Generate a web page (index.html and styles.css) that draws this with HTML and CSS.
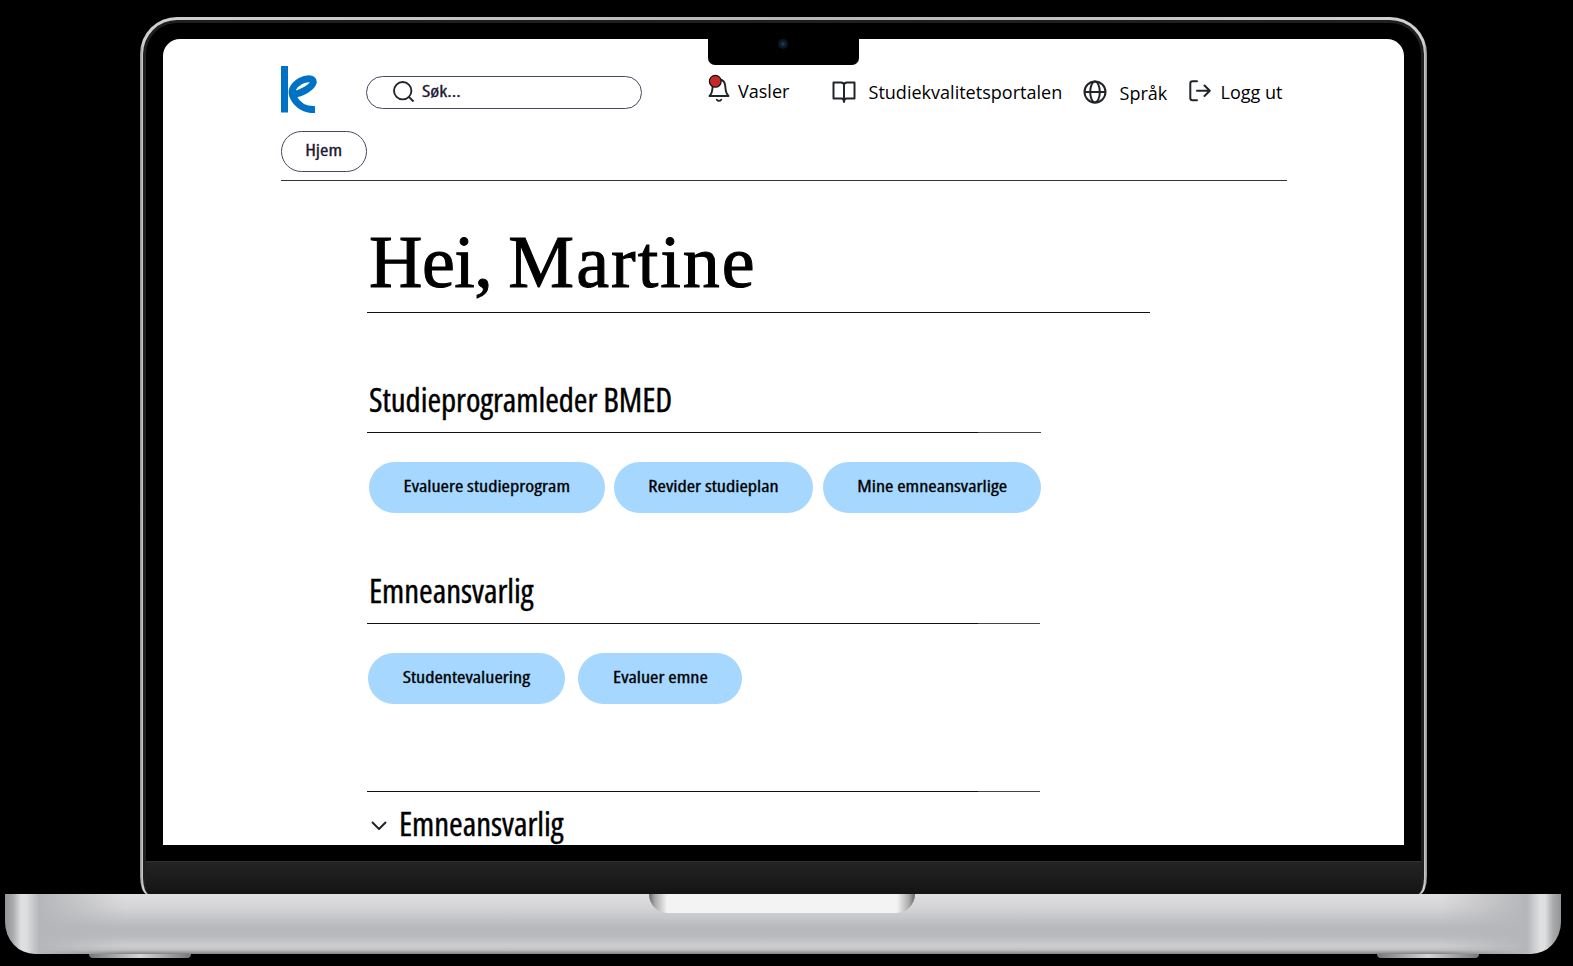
FILE: index.html
```html
<!DOCTYPE html>
<html lang="no">
<head>
  <meta charset="UTF-8">
  <meta name="viewport" content="width=device-width, initial-scale=1.0">
  <title>Studiekvalitetsportalen</title>
  <link rel="stylesheet" href="styles.css">
</head>
<body>
  <div class="laptop">
    <div class="lid">
      <div class="bezel">
        <div class="screen">
          <div class="notch"><span class="camera"></span></div>

          <header class="header">
            <div class="topbar">
              <svg class="logo" width="37" height="48" viewBox="0 0 37 48">
                <path d="M0 0H7V46.500H0Z" fill="#0072c6"/>
                <path d="M12 28.500C21 27.500 31.500 21 32.300 16C32.500 11.500 25 12 19.500 15C12.500 19 9 25 12.500 31.500C16.500 39.500 24.500 43.800 34 43.500" fill="none" stroke="#0072c6" stroke-width="7"/>
              </svg>
              <div class="search">
                <svg width="22" height="22" viewBox="0 0 22 22" fill="none" stroke="#212529" stroke-width="1.900">
                  <circle cx="9.700" cy="9.700" r="8.700"/>
                  <path d="M15.800 15.800L20.500 20.500"/>
                </svg>
                <span class="label">Søk...</span>
              </div>
              <nav class="nav">
                <a class="nav-item vasler">
                  <svg width="22" height="28" viewBox="0 0 22 28" fill="none" stroke="#212529" stroke-width="1.900" stroke-linecap="round" stroke-linejoin="round">
                    <path d="M1.500 22H20.500C18 19.500 17.500 17 17.300 12.500C17 7.500 14.500 5.500 11 5.500C7 5.500 4.700 8 4.600 12.500C4.500 17 4 19.500 1.500 22Z"/>
                    <path d="M8.800 25.700C10 27.300 12 27.300 13.200 25.700"/>
                    <circle cx="7.300" cy="7.300" r="5.900" fill="#c62828" stroke="#111" stroke-width="1.200"/>
                  </svg>
                  <span>Vasler</span>
                </a>
                <a class="nav-item portal">
                  <svg width="24" height="22" viewBox="0 0 24 22" fill="none" stroke="#212529" stroke-width="2" stroke-linejoin="round">
                    <path d="M12 4C12 2.300 10.800 1.500 9 1.500H1.500V17.500H9.500C11 17.500 12 18.300 12 21V4C12 2.300 13.200 1.500 15 1.500H22.500V17.500H14.500C13 17.500 12 18.300 12 21"/>
                  </svg>
                  <span>Studiekvalitetsportalen</span>
                </a>
                <a class="nav-item sprak">
                  <svg width="24" height="24" viewBox="0 0 24 24" fill="none" stroke="#212529" stroke-width="2">
                    <circle cx="12" cy="12" r="10.500"/>
                    <ellipse cx="12" cy="12" rx="4.800" ry="10.500"/>
                    <path d="M1.500 12H22.500"/>
                  </svg>
                  <span>Språk</span>
                </a>
                <a class="nav-item logg-ut">
                  <svg width="22" height="22" viewBox="0 0 22 22" fill="none" stroke="#212529" stroke-width="2" stroke-linecap="round" stroke-linejoin="round">
                    <path d="M8 1.300H3.500C2 1.300 1.300 2 1.300 3.500V18C1.300 19.500 2 20.300 3.500 20.300H8"/>
                    <path d="M8 10.800H20.500M15.500 5.500L20.800 10.800L15.500 16"/>
                  </svg>
                  <span>Logg ut</span>
                </a>
              </nav>
            </div>
            <a class="hjem"><span class="label">Hjem</span></a>
          </header>

          <main class="content">
            <h1>Hei, <span class="name">Martine</span></h1>

            <section class="role">
              <h2>Studieprogramleder BMED</h2>
              <div class="buttons">
                <button class="evaluere"><span class="label">Evaluere studieprogram</span></button>
                <button class="revider"><span class="label">Revider studieplan</span></button>
                <button class="mine"><span class="label">Mine emneansvarlige</span></button>
              </div>
            </section>

            <section class="role emne">
              <h2>Emneansvarlig</h2>
              <div class="buttons">
                <button class="student"><span class="label">Studentevaluering</span></button>
                <button class="evaluer-emne"><span class="label">Evaluer emne</span></button>
              </div>
            </section>

            <section class="accordion">
              <svg width="16" height="10" viewBox="0 0 16 10" fill="none" stroke="#212529" stroke-width="2" stroke-linecap="round" stroke-linejoin="round">
                <path d="M1.500 1.500L8 8L14.500 1.500"/>
              </svg>
              <h2>Emneansvarlig</h2>
            </section>
          </main>
        </div>
        <div class="chin"></div>
      </div>
    </div>
    <div class="base"><div class="thumb"></div></div>
    <div class="feet"><span></span><span></span></div>
  </div>
</body>
</html>
```

FILE: styles.css
```css
* {
  box-sizing: border-box;
}
body {
  margin: 0;
  height: 966px;
  overflow: hidden;
  background: #000;
  color: #000;
  font-family: "Open Sans", "Noto Sans", sans-serif;
}
.laptop {
  display: flex;
  flex-direction: column;
  padding: 17px 0 0 5px;
}

/* lid */
.lid {
  width: 1287px;
  height: 877px;
  margin-left: 135px;
  padding: 3px;
  border-radius: 37px 37px 7px 7px / 37px 37px 18px 18px;
  background: linear-gradient(90deg, #8d8d8f, #d0d0d2 3px, #b5b5b7 50%, #d0d0d2 1284px, #8d8d8f);
}
.bezel {
  height: 874px;
  padding: 16px 17px 0;
  border: 3px solid #1f1f1f;
  border-bottom: none;
  border-radius: 34px 34px 6px 6px / 34px 34px 16px 16px;
  background: #000;
  overflow: hidden;
}
.screen {
  position: relative;
  width: 1241px;
  height: 806px;
  border-radius: 17px 17px 0 0;
  background: #fff;
  overflow: hidden;
}
.notch {
  position: absolute;
  top: 0;
  left: 545px;
  width: 151px;
  height: 26px;
  border-radius: 0 0 7px 7px;
  background: #000;
}
.camera {
  position: absolute;
  top: 0;
  left: 70px;
  width: 10px;
  height: 10px;
  border-radius: 50%;
  background: radial-gradient(circle, #1d4570 0, #0c1c30 35%, #111416 60%);
}
.chin {
  height: 33px;
  margin: 16px -17px 0;
  border-top: 1px solid #303030;
  background: linear-gradient(#242424, #141414);
}

/* semi-condensed text in the pills */
.label {
  display: inline-block;
  font-size: 16px;
  font-weight: 500;
  font-stretch: 75%;
  transform: scaleX(1.265);
  -webkit-text-stroke: 0.300px currentColor;
}

/* header */
.header {
  width: 1006px;
  height: 142px;
  margin-left: 118px;
  padding-top: 27px;
  border-bottom: 1px solid #333;
}
.topbar {
  display: flex;
  align-items: flex-start;
  height: 65px;
}
.search {
  display: flex;
  align-items: center;
  width: 276px;
  height: 33px;
  margin: 10px 0 0 48px;
  padding: 0 0 2px 26px;
  border: 1px solid #4b4660;
  border-radius: 17px;
}
.search .label {
  margin: -1px 0 0 7px;
  color: #1c1733;
  transform-origin: left;
}
.nav {
  display: flex;
  margin-left: 66px;
  padding-top: 8px;
  font-size: 18.050px;
  line-height: 34px;
  white-space: nowrap;
}
.nav-item {
  display: flex;
  height: 34px;
}
.vasler {
  width: 124px;
}
.vasler span {
  margin-left: 8px;
}
.portal {
  width: 251px;
}
.portal svg {
  margin-top: 7px;
}
.portal span {
  margin: 1px 0 0 12.500px;
}
.sprak {
  width: 106px;
}
.sprak svg {
  margin-top: 6px;
}
.sprak span {
  margin: 2px 0 0 12.500px;
}
.logg-ut svg {
  margin-top: 6px;
}
.logg-ut span {
  margin: 1px 0 0 9.500px;
}
.hjem {
  display: block;
  width: 86px;
  height: 41px;
  border: 1px solid #4b4660;
  border-radius: 21px;
  color: #1c1733;
  line-height: 37px;
  text-align: center;
}

/* content */
.content {
  width: 783px;
  margin-left: 204px;
}
h1 {
  height: 132px;
  margin: 0;
  padding: 39px 0 0 2px;
  border-bottom: 1px solid #111;
  font-family: "Liberation Serif", serif;
  font-size: 74px;
  font-weight: 400;
  letter-spacing: -0.500px;
  line-height: 84px;
  white-space: nowrap;
  word-spacing: -2px;
  -webkit-text-stroke: 1px #000;
}
.name {
  letter-spacing: 2px;
}
h2 {
  margin: 0;
  font-size: 33px;
  font-weight: 400;
  font-stretch: 75%;
  letter-spacing: -0.060px;
  line-height: 46px;
  white-space: nowrap;
  -webkit-text-stroke: 0.400px #000;
}
.role {
  width: 674px;
  padding-top: 63px;
}
.role h2 {
  height: 57px;
  padding-left: 2px;
  border-bottom: 1px solid #111;
  border-image: linear-gradient(90deg, #111 610px, #444 610px) 1;
  line-height: 47px;
}
.emne {
  width: 673px;
  padding-top: 54px;
}
.buttons {
  display: flex;
  gap: 9.500px;
  padding: 29px 0 0 2px;
}
.emne .buttons {
  gap: 13px;
  padding-left: 1px;
}
button {
  height: 51px;
  padding: 0 0 3px;
  border: none;
  border-radius: 26px;
  background: #a5d7ff;
  color: #000;
  font-family: inherit;
  white-space: nowrap;
}
.evaluere {
  width: 235.500px;
}
.revider {
  width: 199px;
}
.mine {
  width: 218.500px;
}
.student {
  width: 197px;
}
.evaluer-emne {
  width: 164px;
}
.accordion {
  display: flex;
  width: 673px;
  margin-top: 87px;
  padding: 12px 0 0 4px;
  border-top: 1px solid #111;
  border-image: linear-gradient(90deg, #111 610px, #444 610px) 1;
}
.accordion svg {
  margin: 17px 12px 0 0;
}
.accordion h2 {
  line-height: 40px;
}

/* base */
.base {
  width: 1556px;
  height: 60px;
  border-radius: 0 0 30px 30px / 0 0 32px 32px;
  background:
    linear-gradient(90deg, #929396, #aaabad 8px, #dedfe0 16px, #dedfe0 21px, #b5b6b9 34px, transparent 120px, transparent 1436px, #b5b6b9 1522px, #dedfe0 1535px, #dedfe0 1540px, #aaabad 1548px, #929396),
    linear-gradient(#dfdfe0 0, #d4d4d6 14px, #b7b8bc 34px, #b9babd 42px, #cdcdcf 52px, #bfc0c1 56px, #808184 60px);
}
.thumb {
  width: 266px;
  height: 19px;
  margin: 0 auto;
  border-radius: 0 0 19px 19px;
  transform: translateX(-1px);
  background: linear-gradient(90deg, #666 0, #aaa 6px, #f3f3f3 18px, #f3f3f3 248px, #aaa 260px, #666);
}
.feet {
  display: flex;
  justify-content: space-between;
  width: 1556px;
  padding: 0 82px 0 84px;
}
.feet span {
  width: 102px;
  height: 4px;
  border-radius: 0 0 5px 5px;
  background: linear-gradient(90deg, #777, #d5d5d5 50%, #777);
}
```
